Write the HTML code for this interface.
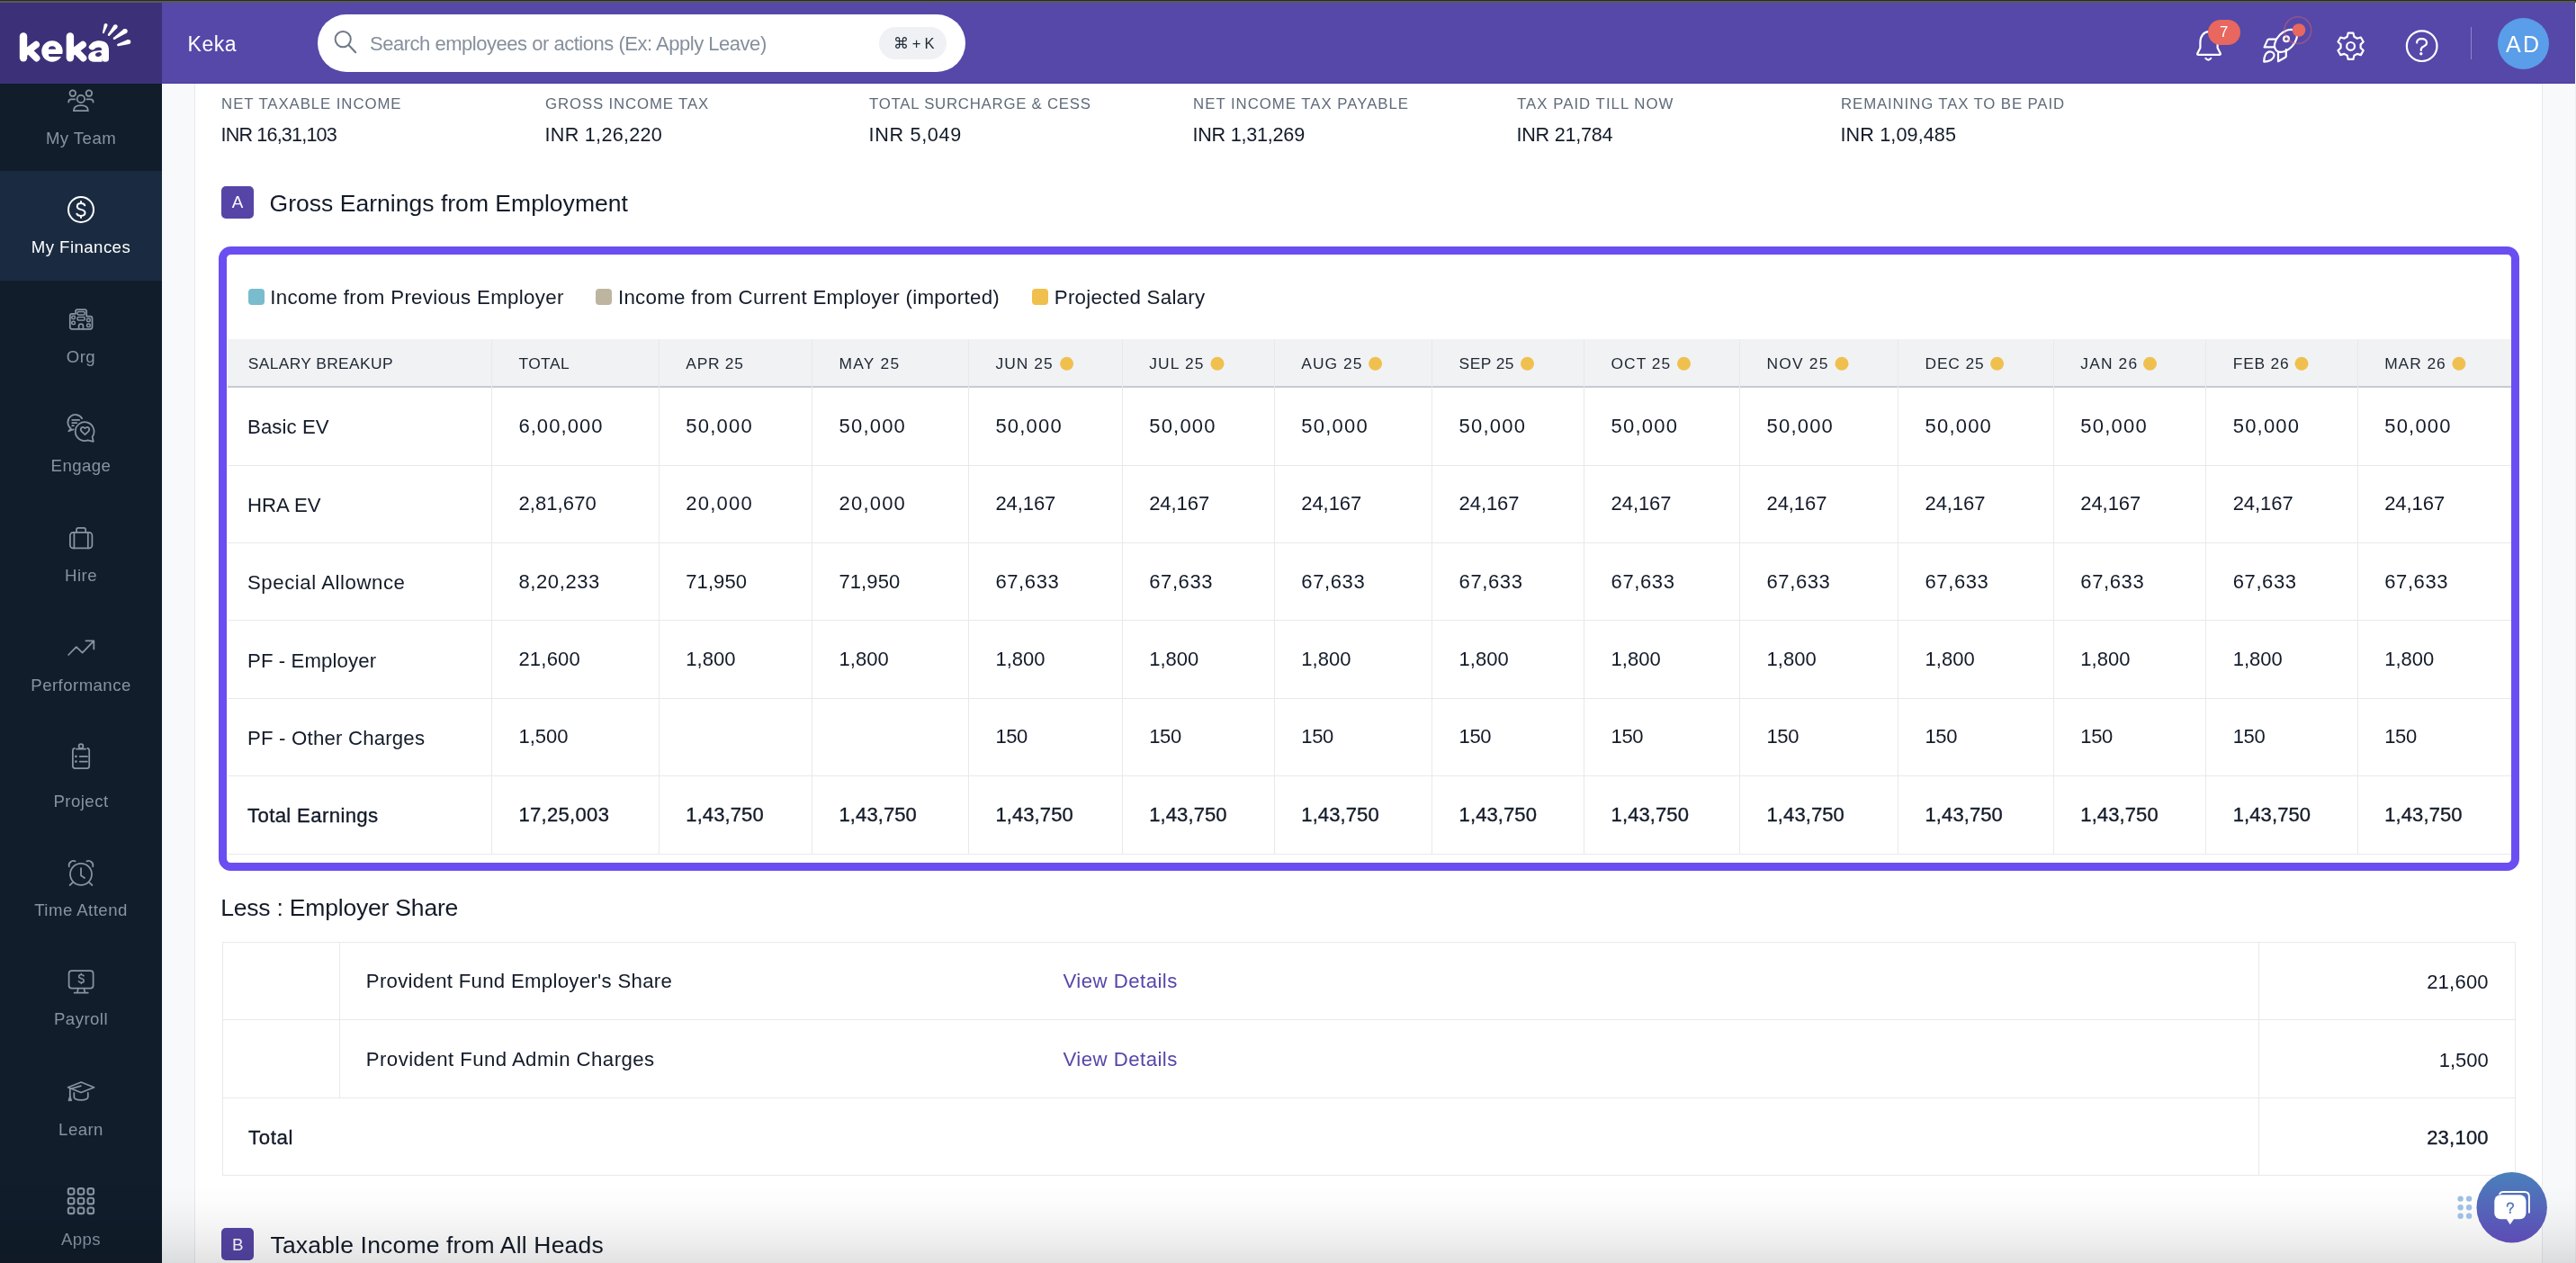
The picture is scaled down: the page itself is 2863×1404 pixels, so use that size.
<!DOCTYPE html><html><head><meta charset="utf-8"><style>html,body{margin:0;padding:0;width:2863px;height:1404px;overflow:hidden;background:#fff}body{position:relative;font-family:"Liberation Sans",sans-serif}.t{position:absolute;white-space:nowrap;line-height:1}</style></head><body>
<div style="position:absolute;left:0px;top:0px;width:2863px;height:1404px;background:#ffffff;"></div>
<div style="position:absolute;left:180px;top:93px;width:36px;height:1311px;background:#f8f9fb;"></div>
<div style="position:absolute;left:216px;top:93px;width:1px;height:1311px;background:#e6e8ec;"></div>
<div style="position:absolute;left:2825px;top:93px;width:1px;height:1311px;background:#e6e8ec;"></div>
<div style="position:absolute;left:2826px;top:93px;width:36px;height:1311px;background:#f8f9fb;"></div>
<div style="position:absolute;left:2862px;top:93px;width:1px;height:1311px;background:#eceef1;"></div>
<div style="position:absolute;left:0px;top:0px;width:2863px;height:1px;background:#2a2a2a;"></div>
<div style="position:absolute;left:0px;top:1px;width:2863px;height:2px;background:#5a5a56;"></div>
<div style="position:absolute;left:180px;top:3px;width:2682px;height:90px;background:#5548a9;"></div>
<div style="position:absolute;left:180px;top:92px;width:2682px;height:1px;background:#4a3c9f;"></div>
<div style="position:absolute;left:0px;top:3px;width:180px;height:90px;background:#3c3178;"></div>
<div style="position:absolute;left:0px;top:93px;width:180px;height:1311px;background:#111d2b;"></div>
<div style="position:absolute;left:0px;top:190px;width:180px;height:122px;background:#1a2b41;"></div>
<div style="position:absolute;left:353px;top:16px;width:720px;height:64px;background:#ffffff;border-radius:32px"></div>
<div style="position:absolute;left:977px;top:30px;width:75px;height:36px;background:#eff1f4;border-radius:18px"></div>
<svg style="position:absolute;left:368px;top:31px" width="32" height="32" viewBox="0 0 32 32"><circle cx="13.2" cy="12.6" r="8.6" fill="none" stroke="#6f7a88" stroke-width="2"/><line x1="19.5" y1="19" x2="27.2" y2="27.2" stroke="#6f7a88" stroke-width="2.1" stroke-linecap="round"/></svg>
<div style="position:absolute;left:2776px;top:19.5px;width:57px;height:57px;background:#5a9de8;border-radius:50%"></div>
<div style="position:absolute;left:2745.5px;top:30px;width:1.3px;height:36px;background:rgba(190,180,240,0.55);"></div>
<div style="position:absolute;left:246px;top:206.5px;width:36px;height:36px;background:#5645a6;border-radius:5px"></div>
<div style="position:absolute;left:243px;top:274px;width:2557px;height:693.6px;box-sizing:border-box;border:9.7px solid #6b4ef1;border-right-width:9.3px;border-radius:13.5px;background:#fff"></div>
<div style="position:absolute;left:275.8px;top:321px;width:17.8px;height:17.8px;background:#79bccd;border-radius:4px"></div>
<div style="position:absolute;left:662.4px;top:321px;width:17.8px;height:17.8px;background:#bdb59f;border-radius:4px"></div>
<div style="position:absolute;left:1147.3px;top:321px;width:17.8px;height:17.8px;background:#f0c04e;border-radius:4px"></div>
<div style="position:absolute;left:253px;top:377px;width:2538px;height:52.5px;background:#f1f2f4;"></div>
<div style="position:absolute;left:253px;top:429px;width:2538px;height:2.2px;background:#c5cbd3;"></div>
<div style="position:absolute;left:545.9px;top:377px;width:1.2px;height:572.5px;background:#e7e9ec;"></div>
<div style="position:absolute;left:731.8px;top:377px;width:1.2px;height:572.5px;background:#e7e9ec;"></div>
<div style="position:absolute;left:902.0px;top:377px;width:1.2px;height:572.5px;background:#e7e9ec;"></div>
<div style="position:absolute;left:1075.9px;top:377px;width:1.2px;height:572.5px;background:#e7e9ec;"></div>
<div style="position:absolute;left:1246.7px;top:377px;width:1.2px;height:572.5px;background:#e7e9ec;"></div>
<div style="position:absolute;left:1415.8px;top:377px;width:1.2px;height:572.5px;background:#e7e9ec;"></div>
<div style="position:absolute;left:1591.1px;top:377px;width:1.2px;height:572.5px;background:#e7e9ec;"></div>
<div style="position:absolute;left:1760.1px;top:377px;width:1.2px;height:572.5px;background:#e7e9ec;"></div>
<div style="position:absolute;left:1933.0px;top:377px;width:1.2px;height:572.5px;background:#e7e9ec;"></div>
<div style="position:absolute;left:2109.0px;top:377px;width:1.2px;height:572.5px;background:#e7e9ec;"></div>
<div style="position:absolute;left:2281.8px;top:377px;width:1.2px;height:572.5px;background:#e7e9ec;"></div>
<div style="position:absolute;left:2451.2px;top:377px;width:1.2px;height:572.5px;background:#e7e9ec;"></div>
<div style="position:absolute;left:2619.7px;top:377px;width:1.2px;height:572.5px;background:#e7e9ec;"></div>
<div style="position:absolute;left:253px;top:516.6px;width:2538px;height:1.2px;background:#e7e9ec;"></div>
<div style="position:absolute;left:253px;top:603.0px;width:2538px;height:1.2px;background:#e7e9ec;"></div>
<div style="position:absolute;left:253px;top:689.1px;width:2538px;height:1.2px;background:#e7e9ec;"></div>
<div style="position:absolute;left:253px;top:775.9px;width:2538px;height:1.2px;background:#e7e9ec;"></div>
<div style="position:absolute;left:253px;top:862.0px;width:2538px;height:1.2px;background:#e7e9ec;"></div>
<div style="position:absolute;left:253px;top:948.9px;width:2538px;height:1.2px;background:#e7e9ec;"></div>
<div style="position:absolute;left:246.5px;top:1046.8px;width:2549px;height:260px;box-sizing:border-box;border:1.2px solid #e7e9ec"></div>
<div style="position:absolute;left:246.5px;top:1132.8px;width:2549px;height:1.2px;background:#e7e9ec;"></div>
<div style="position:absolute;left:246.5px;top:1219.9px;width:2549px;height:1.2px;background:#e7e9ec;"></div>
<div style="position:absolute;left:377px;top:1046.8px;width:1.2px;height:173.6px;background:#e7e9ec;"></div>
<div style="position:absolute;left:2510px;top:1046.8px;width:1.2px;height:260px;background:#e7e9ec;"></div>
<div style="position:absolute;left:246px;top:1365.2px;width:36px;height:36px;background:#5645a6;border-radius:5px"></div>
<svg style="position:absolute;left:0;top:0" width="180" height="93" viewBox="0 0 180 93"><line x1="26" y1="40.5" x2="26" y2="64.2" stroke="#ffffff" stroke-width="8.4" stroke-linecap="round"/><line x1="29" y1="58" x2="40.2" y2="49.6" stroke="#ffffff" stroke-width="7.6" stroke-linecap="round"/><line x1="32.5" y1="56.5" x2="40.6" y2="64.6" stroke="#ffffff" stroke-width="7.6" stroke-linecap="round"/><line x1="77.9" y1="40.5" x2="77.9" y2="64.2" stroke="#ffffff" stroke-width="8.4" stroke-linecap="round"/><line x1="80.9" y1="58" x2="92.1" y2="49.6" stroke="#ffffff" stroke-width="7.6" stroke-linecap="round"/><line x1="84.4" y1="56.5" x2="92.5" y2="64.6" stroke="#ffffff" stroke-width="7.6" stroke-linecap="round"/><circle cx="57.95" cy="57.05" r="11.7" fill="#ffffff"/><path d="M53.9 54.8 Q53.9 51.25 57.95 51.25 Q62 51.25 62 54.8 Z" fill="#3c3178"/><path d="M54.1 60 H70.5 V62.9 H55.5 Q54.1 62.9 54.1 61.45 Z" fill="#3c3178"/><path d="M98.4 52.6 C100.6 47.8 104.7 45.3 110.2 45.3 C117.3 45.3 121 49.2 121 55.5 V60 H113.2 V55.8 C113.2 53.6 112 52.6 109.8 52.6 C107.6 52.6 106 53.3 104.9 54.6 C103.5 56.2 99.5 55.5 98.4 52.6 Z" fill="#ffffff"/><path d="M98.2 63.4 C98.2 59.2 102.3 57.2 107.2 56.6 L113.6 55.8 V68.4 C111.5 68.7 108.5 68.8 105.5 68.8 C101 68.8 98.2 66.8 98.2 63.4 Z" fill="#ffffff"/><path d="M113.2 55 H121 V65.2 C121 67.6 119.6 68.8 117.1 68.8 C114.6 68.8 113.2 67.6 113.2 65.2 Z" fill="#ffffff"/><ellipse cx="109.4" cy="60.6" rx="3.5" ry="2.4" transform="rotate(-12 109.4 60.6)" fill="#3c3178"/><polygon points="115.85,36.60 119.41,28.38 115.79,27.22 113.95,36.00" fill="#ffffff"/><circle cx="117.60" cy="27.80" r="1.90" fill="#ffffff"/><circle cx="114.90" cy="36.30" r="1.00" fill="#ffffff"/><polygon points="121.94,39.45 130.17,31.10 126.43,28.10 120.06,37.95" fill="#ffffff"/><circle cx="128.30" cy="29.60" r="2.40" fill="#ffffff"/><circle cx="121.00" cy="38.70" r="1.20" fill="#ffffff"/><polygon points="127.73,43.87 140.52,36.83 137.48,32.37 126.27,41.73" fill="#ffffff"/><circle cx="139.00" cy="34.60" r="2.70" fill="#ffffff"/><circle cx="127.00" cy="42.80" r="1.30" fill="#ffffff"/><polygon points="131.65,51.15 143.53,48.89 142.07,44.11 130.95,48.85" fill="#ffffff"/><circle cx="142.80" cy="46.50" r="2.50" fill="#ffffff"/><circle cx="131.30" cy="50.00" r="1.20" fill="#ffffff"/></svg>
<svg style="position:absolute;left:0;top:0" width="2863" height="93" viewBox="0 0 2863 93"><path d="M2442.3 59.2 L2445.4 53.2 V47 C2445.4 40 2449.5 35.2 2455 35.2 C2460.5 35.2 2464.6 40 2464.6 47 V53.2 L2467.7 59.2 C2468.3 60.4 2467.6 60.8 2466.5 60.8 H2443.5 C2442.4 60.8 2441.7 60.4 2442.3 59.2 Z" fill="none" stroke="#fff" stroke-width="2.2" stroke-linecap="round" stroke-linejoin="round"/><path d="M2451.4 64.9 Q2454.3 68.3 2457.2 64.9" fill="none" stroke="#fff" stroke-width="2.2" stroke-linecap="round" stroke-linejoin="round"/><rect x="2454" y="22" width="36" height="28" rx="14" fill="#e8675e"/><ellipse cx="2540.4" cy="45.4" rx="15.0" ry="9.3" transform="rotate(-45 2540.4 45.4)" fill="none" stroke="#fff" stroke-width="2.2" stroke-linecap="round" stroke-linejoin="round"/><circle cx="2541.0" cy="43.3" r="2.9" fill="none" stroke="#fff" stroke-width="2.2" stroke-linecap="round" stroke-linejoin="round"/><path d="M2529.6 43.6 H2521.8 Q2520.6 43.6 2520.1 44.6 L2516.6 52.4 H2527.6" fill="none" stroke="#fff" stroke-width="2.2" stroke-linecap="round" stroke-linejoin="round"/><path d="M2540.8 55.2 V62.2 Q2540.8 63.2 2539.9 63.7 L2532 68.2 V57.8" fill="none" stroke="#fff" stroke-width="2.2" stroke-linecap="round" stroke-linejoin="round"/><path d="M2516.2 68.6 C2516.2 62.2 2518.7 57.3 2522.8 57.3 C2525.8 57.3 2527.9 59.6 2527.5 61.9 C2526.9 65.8 2522.2 68.6 2516.2 68.6 Z" fill="none" stroke="#fff" stroke-width="2.2" stroke-linecap="round" stroke-linejoin="round"/><circle cx="2553.8" cy="33.6" r="14.9" fill="none" stroke="rgba(232,103,95,0.42)" stroke-width="1.6"/><circle cx="2555" cy="33.5" r="7.3" fill="#e8675e"/><path d="M2608.77 40.78 L2609.76 36.67 L2615.44 36.67 L2616.43 40.78 L2619.80 42.72 L2623.85 41.52 L2626.69 46.45 L2623.63 49.36 L2623.63 53.24 L2626.69 56.15 L2623.85 61.08 L2619.80 59.88 L2616.43 61.82 L2615.44 65.93 L2609.76 65.93 L2608.77 61.82 L2605.40 59.88 L2601.35 61.08 L2598.51 56.15 L2601.57 53.24 L2601.57 49.36 L2598.51 46.45 L2601.35 41.52 L2605.40 42.72 Z" fill="none" stroke="#fff" stroke-width="2.2" stroke-linecap="round" stroke-linejoin="round"/><circle cx="2612.6" cy="51.4" r="4.4" fill="none" stroke="#fff" stroke-width="2.2" stroke-linecap="round" stroke-linejoin="round"/><circle cx="2691.7" cy="51.2" r="16.8" fill="none" stroke="#fff" stroke-width="2.2" stroke-linecap="round" stroke-linejoin="round"/><path d="M2686.1 47.6 C2686.1 44.6 2688.5 43.1 2691.6 43.1 C2694.7 43.1 2697.1 44.9 2697.1 47.6 C2697.1 49.9 2695.4 50.9 2693.5 51.8 C2691.8 52.6 2690.8 53.5 2690.8 55.3 V56" fill="none" stroke="#fff" stroke-width="2.2" stroke-linecap="round" stroke-linejoin="round"/><circle cx="2690.8" cy="59.7" r="1.7" fill="#fff"/></svg>
<svg style="position:absolute;left:0;top:0" width="180" height="1404" viewBox="0 0 180 1404"><circle cx="89.9" cy="110" r="4.2" fill="none" stroke="#8794a2" stroke-width="1.75" stroke-linecap="round" stroke-linejoin="round"/><circle cx="80.8" cy="103.7" r="3.3" fill="none" stroke="#8794a2" stroke-width="1.75" stroke-linecap="round" stroke-linejoin="round"/><circle cx="98.9" cy="103.7" r="3.3" fill="none" stroke="#8794a2" stroke-width="1.75" stroke-linecap="round" stroke-linejoin="round"/><path d="M81.9 123.2 Q81.9 117.2 89.9 117.2 Q97.9 117.2 97.9 123.2 Z" fill="none" stroke="#8794a2" stroke-width="1.75" stroke-linecap="round" stroke-linejoin="round"/><path d="M83.4 110.4 H79.2 Q76.2 110.4 76.2 113.6" fill="none" stroke="#8794a2" stroke-width="1.75" stroke-linecap="round" stroke-linejoin="round"/><path d="M96.4 110.4 H100.6 Q103.6 110.4 103.6 113.6" fill="none" stroke="#8794a2" stroke-width="1.75" stroke-linecap="round" stroke-linejoin="round"/><circle cx="90" cy="233" r="14" fill="none" stroke="#fff" stroke-width="2" stroke-linecap="round" stroke-linejoin="round"/><path d="M94.3 228.3 C93.7 226.9 92.2 226.1 90 226.1 C87.4 226.1 85.8 227.5 85.8 229.4 C85.8 231.6 87.8 232.3 90 232.9 C92.5 233.5 94.5 234.3 94.5 236.6 C94.5 238.6 92.7 239.9 90 239.9 C87.7 239.9 86.1 239.1 85.4 237.7 M90 223.9 V226.1 M90 239.9 V242.1" fill="none" stroke="#fff" stroke-width="2" stroke-linecap="round" stroke-linejoin="round"/><path d="M77.8 363.6 V351 Q77.8 348.8 80 348.8 H84 V346.3 Q84 344.2 86.1 344.2 H94.1 Q96.2 344.2 96.2 346.3 V351.6 H100.3 Q102.5 351.6 102.5 353.8 V363.6 Q102.5 365.8 100.3 365.8 H80 Q77.8 365.8 77.8 363.6 Z" fill="none" stroke="#8794a2" stroke-width="1.75" stroke-linecap="round" stroke-linejoin="round"/><rect x="79.8" y="351.3" width="3.6" height="3.1" rx="1.2" fill="none" stroke="#8794a2" stroke-width="1.5"/><rect x="79.8" y="357.3" width="3.6" height="3.1" rx="1.2" fill="none" stroke="#8794a2" stroke-width="1.5"/><rect x="86.0" y="346.6" width="8.2" height="3.3" rx="1.2" fill="none" stroke="#8794a2" stroke-width="1.5"/><rect x="86.0" y="352.5" width="8.2" height="3.4" rx="1.2" fill="none" stroke="#8794a2" stroke-width="1.5"/><rect x="96.6" y="354.1" width="3.6" height="3.3" rx="1.2" fill="none" stroke="#8794a2" stroke-width="1.5"/><rect x="96.6" y="360.0" width="3.6" height="3.4" rx="1.2" fill="none" stroke="#8794a2" stroke-width="1.5"/><path d="M87.6 365.6 V362.2 Q87.6 360 90 360 Q92.4 360 92.4 362.2 V365.6" fill="none" stroke="#8794a2" stroke-width="1.75" stroke-linecap="round" stroke-linejoin="round"/><path d="M91.2 465.2 A8.5 8.5 0 1 0 78.9 476.4 L76.3 479.3 L81.6 477.4" fill="none" stroke="#8794a2" stroke-width="1.75" stroke-linecap="round" stroke-linejoin="round"/><path d="M80.2 466.9 H88.1 M80.2 470 H85.3 M80.2 473 H81.9" fill="none" stroke="#8794a2" stroke-width="1.75" stroke-linecap="round" stroke-linejoin="round"/><path d="M97.6 489.4 A10.4 10.4 0 1 1 102.6 485.6 L103.8 490.8 Z" fill="none" stroke="#8794a2" stroke-width="1.75" stroke-linecap="round" stroke-linejoin="round"/><path d="M94.5 483.2 L90.8 479.6 Q88.9 477.6 90.3 475.7 Q92.1 473.8 94.5 476.1 Q96.9 473.8 98.7 475.7 Q100.1 477.6 98.2 479.6 Z" fill="none" stroke="#8794a2" stroke-width="1.75" stroke-linecap="round" stroke-linejoin="round"/><rect x="77.9" y="591.8" width="24.5" height="17.6" rx="3.4" fill="none" stroke="#8794a2" stroke-width="1.75" stroke-linecap="round" stroke-linejoin="round"/><path d="M85 591.8 V588.9 Q85 586.8 87.1 586.8 H93.1 Q95.2 586.8 95.2 588.9 V591.8 M82.4 591.8 V609.4 M97.8 591.8 V609.4" fill="none" stroke="#8794a2" stroke-width="1.75" stroke-linecap="round" stroke-linejoin="round"/><path d="M76.1 728 L84.8 719.2 L91.6 725.6 L104 712.7 M95.4 712.3 H104.3 V721.4" fill="none" stroke="#8794a2" stroke-width="1.75" stroke-linecap="round" stroke-linejoin="round"/><path d="M82.9 831.8 Q80.9 832 80.9 834.6 V851.6 Q80.9 854.1 83.4 854.1 H96.7 Q99.2 854.1 99.2 851.6 V834.6 Q99.2 832 97.2 831.8" fill="none" stroke="#8794a2" stroke-width="1.75" stroke-linecap="round" stroke-linejoin="round"/><circle cx="90" cy="829.5" r="2.4" fill="none" stroke="#8794a2" stroke-width="1.75" stroke-linecap="round" stroke-linejoin="round"/><path d="M84.9 832.6 H95.1" fill="none" stroke="#8794a2" stroke-width="1.75" stroke-linecap="round" stroke-linejoin="round"/><circle cx="84.4" cy="840.9" r="1.3" fill="#8794a2"/><circle cx="84.4" cy="846.6" r="1.3" fill="#8794a2"/><path d="M88.7 840.9 H97 M88.7 846.6 H97" fill="none" stroke="#8794a2" stroke-width="1.75" stroke-linecap="round" stroke-linejoin="round"/><circle cx="90" cy="971.8" r="12" fill="none" stroke="#8794a2" stroke-width="1.75" stroke-linecap="round" stroke-linejoin="round"/><path d="M90 965 V973.2 L94 976" fill="none" stroke="#8794a2" stroke-width="1.75" stroke-linecap="round" stroke-linejoin="round"/><path d="M76.8 963.3 A5 5 0 0 1 83.6 957.4 M103.2 963.3 A5 5 0 0 0 96.4 957.4" fill="none" stroke="#8794a2" stroke-width="1.75" stroke-linecap="round" stroke-linejoin="round"/><path d="M81.2 980.6 L77.6 984 M98.8 980.6 L102.4 984" fill="none" stroke="#8794a2" stroke-width="1.75" stroke-linecap="round" stroke-linejoin="round"/><rect x="76.6" y="1079" width="27" height="19.6" rx="3.2" fill="none" stroke="#8794a2" stroke-width="1.75" stroke-linecap="round" stroke-linejoin="round"/><path d="M86.8 1098.8 L86 1103.3 M93.5 1098.8 L94.3 1103.3 M82.6 1103.5 H97.8" fill="none" stroke="#8794a2" stroke-width="1.75" stroke-linecap="round" stroke-linejoin="round"/><path d="M93.1 1084.9 C92.7 1084 91.7 1083.6 90.3 1083.6 C88.6 1083.6 87.6 1084.4 87.6 1085.6 C87.6 1087 88.9 1087.4 90.3 1087.8 C91.9 1088.2 93.2 1088.7 93.2 1090.2 C93.2 1091.5 92 1092.3 90.3 1092.3 C88.8 1092.3 87.8 1091.7 87.4 1090.8 M90.3 1082.3 V1083.6 M90.3 1092.3 V1093.6" fill="none" stroke="#8794a2" stroke-width="1.5" stroke-linecap="round"/><path d="M75.6 1208.8 L90.1 1203 L104.6 1208.8 L90.1 1214.5 Z" fill="none" stroke="#8794a2" stroke-width="1.75" stroke-linecap="round" stroke-linejoin="round"/><path d="M82.3 1214.9 V1219.3 Q82.3 1222.9 90.1 1222.9 Q97.8 1222.9 97.8 1219.3 V1214.9" fill="none" stroke="#8794a2" stroke-width="1.75" stroke-linecap="round" stroke-linejoin="round"/><path d="M89.9 1207.2 L77.8 1210.6 V1219" fill="none" stroke="#8794a2" stroke-width="1.75" stroke-linecap="round" stroke-linejoin="round"/><path d="M76 1223.6 L77.8 1217.8 L79.6 1223.6 Z" fill="#8794a2" stroke="#8794a2" stroke-width="1" stroke-linejoin="round"/><rect x="75.80" y="1321.10" width="6.6" height="6.6" rx="2.2" fill="none" stroke="#8794a2" stroke-width="2.1"/><rect x="75.80" y="1331.80" width="6.6" height="6.6" rx="2.2" fill="none" stroke="#8794a2" stroke-width="2.1"/><rect x="75.80" y="1342.50" width="6.6" height="6.6" rx="2.2" fill="none" stroke="#8794a2" stroke-width="2.1"/><rect x="86.70" y="1321.10" width="6.6" height="6.6" rx="2.2" fill="none" stroke="#8794a2" stroke-width="2.1"/><rect x="86.70" y="1331.80" width="6.6" height="6.6" rx="2.2" fill="none" stroke="#8794a2" stroke-width="2.1"/><rect x="86.70" y="1342.50" width="6.6" height="6.6" rx="2.2" fill="none" stroke="#8794a2" stroke-width="2.1"/><rect x="97.50" y="1321.10" width="6.6" height="6.6" rx="2.2" fill="none" stroke="#8794a2" stroke-width="2.1"/><rect x="97.50" y="1331.80" width="6.6" height="6.6" rx="2.2" fill="none" stroke="#8794a2" stroke-width="2.1"/><rect x="97.50" y="1342.50" width="6.6" height="6.6" rx="2.2" fill="none" stroke="#8794a2" stroke-width="2.1"/></svg>
<svg style="position:absolute;left:0;top:380px" width="2863" height="50" viewBox="0 380 2863 50"><circle cx="1185.6" cy="404.2" r="7.5" fill="#f0c04e"/><circle cx="1353.0" cy="404.2" r="7.5" fill="#f0c04e"/><circle cx="1528.6" cy="404.2" r="7.5" fill="#f0c04e"/><circle cx="1697.5" cy="404.2" r="7.5" fill="#f0c04e"/><circle cx="1871.5" cy="404.2" r="7.5" fill="#f0c04e"/><circle cx="2047.0" cy="404.2" r="7.5" fill="#f0c04e"/><circle cx="2219.6" cy="404.2" r="7.5" fill="#f0c04e"/><circle cx="2389.5" cy="404.2" r="7.5" fill="#f0c04e"/><circle cx="2558.0" cy="404.2" r="7.5" fill="#f0c04e"/><circle cx="2732.9" cy="404.2" r="7.5" fill="#f0c04e"/></svg>
<div style="position:absolute;left:0;top:0;width:2863px;height:1404px;will-change:transform">
<div class="t" style="top:37.83px;font-size:23px;color:#ffffff;letter-spacing:0.501px;left:208.60px;">Keka</div>
<div class="t" style="top:38.08px;font-size:22px;color:#858f9c;letter-spacing:-0.478px;left:411.00px;">Search employees or actions (Ex: Apply Leave)</div>
<div class="t" style="top:40.03px;font-size:16.5px;color:#1f2937;letter-spacing:-0.198px;left:992.50px;">⌘ + K</div>
<div class="t" style="top:27.76px;font-size:16.7px;color:#ffffff;left:2467.00px;">7</div>
<div class="t" style="top:36.64px;font-size:25px;color:#ffffff;letter-spacing:2.383px;left:2785.00px;">AD</div>
<div class="t" style="top:145.26px;font-size:18.6px;color:#8794a2;letter-spacing:0.450px;left:-310.00px;width:800px;text-align:center;">My Team</div>
<div class="t" style="top:266.26px;font-size:18.6px;color:#ffffff;letter-spacing:0.450px;left:-310.00px;width:800px;text-align:center;">My Finances</div>
<div class="t" style="top:387.96px;font-size:18.6px;color:#8794a2;letter-spacing:0.450px;left:-310.00px;width:800px;text-align:center;">Org</div>
<div class="t" style="top:508.86px;font-size:18.6px;color:#8794a2;letter-spacing:0.450px;left:-310.00px;width:800px;text-align:center;">Engage</div>
<div class="t" style="top:631.36px;font-size:18.6px;color:#8794a2;letter-spacing:0.450px;left:-310.00px;width:800px;text-align:center;">Hire</div>
<div class="t" style="top:753.26px;font-size:18.6px;color:#8794a2;letter-spacing:0.450px;left:-310.00px;width:800px;text-align:center;">Performance</div>
<div class="t" style="top:881.66px;font-size:18.6px;color:#8794a2;letter-spacing:0.450px;left:-310.00px;width:800px;text-align:center;">Project</div>
<div class="t" style="top:1003.26px;font-size:18.6px;color:#8794a2;letter-spacing:0.450px;left:-310.00px;width:800px;text-align:center;">Time Attend</div>
<div class="t" style="top:1124.46px;font-size:18.6px;color:#8794a2;letter-spacing:0.450px;left:-310.00px;width:800px;text-align:center;">Payroll</div>
<div class="t" style="top:1246.56px;font-size:18.6px;color:#8794a2;letter-spacing:0.450px;left:-310.00px;width:800px;text-align:center;">Learn</div>
<div class="t" style="top:1368.56px;font-size:18.6px;color:#8794a2;letter-spacing:0.450px;left:-310.00px;width:800px;text-align:center;">Apps</div>
<div class="t" style="top:108.38px;font-size:16.8px;color:#5e6a79;letter-spacing:0.924px;left:246.10px;">NET TAXABLE INCOME</div>
<div class="t" style="top:138.92px;font-size:21.6px;color:#131b29;letter-spacing:-0.834px;left:245.50px;">INR 16,31,103</div>
<div class="t" style="top:108.38px;font-size:16.8px;color:#5e6a79;letter-spacing:0.862px;left:606.10px;">GROSS INCOME TAX</div>
<div class="t" style="top:138.92px;font-size:21.6px;color:#131b29;letter-spacing:0.282px;left:605.50px;">INR 1,26,220</div>
<div class="t" style="top:108.38px;font-size:16.8px;color:#5e6a79;letter-spacing:0.751px;left:966.10px;">TOTAL SURCHARGE &amp; CESS</div>
<div class="t" style="top:138.92px;font-size:21.6px;color:#131b29;letter-spacing:0.688px;left:965.50px;">INR 5,049</div>
<div class="t" style="top:108.38px;font-size:16.8px;color:#5e6a79;letter-spacing:0.988px;left:1326.10px;">NET INCOME TAX PAYABLE</div>
<div class="t" style="top:138.92px;font-size:21.6px;color:#131b29;letter-spacing:-0.235px;left:1325.50px;">INR 1,31,269</div>
<div class="t" style="top:108.38px;font-size:16.8px;color:#5e6a79;letter-spacing:1.022px;left:1686.10px;">TAX PAID TILL NOW</div>
<div class="t" style="top:138.92px;font-size:21.6px;color:#131b29;letter-spacing:-0.261px;left:1685.50px;">INR 21,784</div>
<div class="t" style="top:108.38px;font-size:16.8px;color:#5e6a79;letter-spacing:0.875px;left:2046.10px;">REMAINING TAX TO BE PAID</div>
<div class="t" style="top:138.92px;font-size:21.6px;color:#131b29;letter-spacing:0.115px;left:2045.50px;">INR 1,09,485</div>
<div class="t" style="top:216.29px;font-size:18.8px;color:#ffffff;left:-136.00px;width:800px;text-align:center;">A</div>
<div class="t" style="top:212.57px;font-size:26.5px;color:#131b29;letter-spacing:0.026px;left:299.50px;">Gross Earnings from Employment</div>
<div class="t" style="top:320.22px;font-size:22.3px;color:#131b29;letter-spacing:0.316px;left:300.30px;">Income from Previous Employer</div>
<div class="t" style="top:320.22px;font-size:22.3px;color:#131b29;letter-spacing:0.296px;left:686.90px;">Income from Current Employer (imported)</div>
<div class="t" style="top:320.22px;font-size:22.3px;color:#131b29;letter-spacing:0.243px;left:1171.80px;">Projected Salary</div>
<div class="t" style="top:395.67px;font-size:17.4px;color:#1e2633;letter-spacing:0.367px;left:275.80px;">SALARY BREAKUP</div>
<div class="t" style="top:395.67px;font-size:17.4px;color:#1e2633;letter-spacing:0.448px;left:576.40px;">TOTAL</div>
<div class="t" style="top:395.67px;font-size:17.4px;color:#1e2633;letter-spacing:0.742px;left:762.30px;">APR 25</div>
<div class="t" style="top:395.67px;font-size:17.4px;color:#1e2633;letter-spacing:1.271px;left:932.50px;">MAY 25</div>
<div class="t" style="top:395.67px;font-size:17.4px;color:#1e2633;letter-spacing:1.082px;left:1106.40px;">JUN 25</div>
<div class="t" style="top:395.67px;font-size:17.4px;color:#1e2633;letter-spacing:1.154px;left:1277.20px;">JUL 25</div>
<div class="t" style="top:395.67px;font-size:17.4px;color:#1e2633;letter-spacing:1.053px;left:1446.30px;">AUG 25</div>
<div class="t" style="top:395.67px;font-size:17.4px;color:#1e2633;letter-spacing:0.437px;left:1621.60px;">SEP 25</div>
<div class="t" style="top:395.67px;font-size:17.4px;color:#1e2633;letter-spacing:1.002px;left:1790.60px;">OCT 25</div>
<div class="t" style="top:395.67px;font-size:17.4px;color:#1e2633;letter-spacing:1.203px;left:1963.50px;">NOV 25</div>
<div class="t" style="top:395.67px;font-size:17.4px;color:#1e2633;letter-spacing:0.848px;left:2139.50px;">DEC 25</div>
<div class="t" style="top:395.67px;font-size:17.4px;color:#1e2633;letter-spacing:1.160px;left:2312.30px;">JAN 26</div>
<div class="t" style="top:395.67px;font-size:17.4px;color:#1e2633;letter-spacing:0.815px;left:2481.70px;">FEB 26</div>
<div class="t" style="top:395.67px;font-size:17.4px;color:#1e2633;letter-spacing:0.944px;left:2650.20px;">MAR 26</div>
<div class="t" style="top:464.31px;font-size:22.2px;color:#131b29;letter-spacing:0.081px;left:275.00px;">Basic EV</div>
<div class="t" style="top:462.98px;font-size:22.0px;color:#131b29;letter-spacing:1.065px;left:576.40px;">6,00,000</div>
<div class="t" style="top:462.98px;font-size:22.0px;color:#131b29;letter-spacing:1.211px;left:762.30px;">50,000</div>
<div class="t" style="top:462.98px;font-size:22.0px;color:#131b29;letter-spacing:1.211px;left:932.50px;">50,000</div>
<div class="t" style="top:462.98px;font-size:22.0px;color:#131b29;letter-spacing:1.211px;left:1106.40px;">50,000</div>
<div class="t" style="top:462.98px;font-size:22.0px;color:#131b29;letter-spacing:1.211px;left:1277.20px;">50,000</div>
<div class="t" style="top:462.98px;font-size:22.0px;color:#131b29;letter-spacing:1.211px;left:1446.30px;">50,000</div>
<div class="t" style="top:462.98px;font-size:22.0px;color:#131b29;letter-spacing:1.211px;left:1621.60px;">50,000</div>
<div class="t" style="top:462.98px;font-size:22.0px;color:#131b29;letter-spacing:1.211px;left:1790.60px;">50,000</div>
<div class="t" style="top:462.98px;font-size:22.0px;color:#131b29;letter-spacing:1.211px;left:1963.50px;">50,000</div>
<div class="t" style="top:462.98px;font-size:22.0px;color:#131b29;letter-spacing:1.211px;left:2139.50px;">50,000</div>
<div class="t" style="top:462.98px;font-size:22.0px;color:#131b29;letter-spacing:1.211px;left:2312.30px;">50,000</div>
<div class="t" style="top:462.98px;font-size:22.0px;color:#131b29;letter-spacing:1.211px;left:2481.70px;">50,000</div>
<div class="t" style="top:462.98px;font-size:22.0px;color:#131b29;letter-spacing:1.211px;left:2650.20px;">50,000</div>
<div class="t" style="top:550.71px;font-size:22.2px;color:#131b29;letter-spacing:0.031px;left:275.00px;">HRA EV</div>
<div class="t" style="top:549.38px;font-size:22.0px;color:#131b29;letter-spacing:0.102px;left:576.40px;">2,81,670</div>
<div class="t" style="top:549.38px;font-size:22.0px;color:#131b29;letter-spacing:1.211px;left:762.30px;">20,000</div>
<div class="t" style="top:549.38px;font-size:22.0px;color:#131b29;letter-spacing:1.211px;left:932.50px;">20,000</div>
<div class="t" style="top:549.38px;font-size:22.0px;color:#131b29;letter-spacing:-0.073px;left:1106.40px;">24,167</div>
<div class="t" style="top:549.38px;font-size:22.0px;color:#131b29;letter-spacing:-0.073px;left:1277.20px;">24,167</div>
<div class="t" style="top:549.38px;font-size:22.0px;color:#131b29;letter-spacing:-0.073px;left:1446.30px;">24,167</div>
<div class="t" style="top:549.38px;font-size:22.0px;color:#131b29;letter-spacing:-0.073px;left:1621.60px;">24,167</div>
<div class="t" style="top:549.38px;font-size:22.0px;color:#131b29;letter-spacing:-0.073px;left:1790.60px;">24,167</div>
<div class="t" style="top:549.38px;font-size:22.0px;color:#131b29;letter-spacing:-0.073px;left:1963.50px;">24,167</div>
<div class="t" style="top:549.38px;font-size:22.0px;color:#131b29;letter-spacing:-0.073px;left:2139.50px;">24,167</div>
<div class="t" style="top:549.38px;font-size:22.0px;color:#131b29;letter-spacing:-0.073px;left:2312.30px;">24,167</div>
<div class="t" style="top:549.38px;font-size:22.0px;color:#131b29;letter-spacing:-0.073px;left:2481.70px;">24,167</div>
<div class="t" style="top:549.38px;font-size:22.0px;color:#131b29;letter-spacing:-0.073px;left:2650.20px;">24,167</div>
<div class="t" style="top:637.11px;font-size:22.2px;color:#131b29;letter-spacing:0.560px;left:275.00px;">Special Allownce</div>
<div class="t" style="top:635.78px;font-size:22.0px;color:#131b29;letter-spacing:0.615px;left:576.40px;">8,20,233</div>
<div class="t" style="top:635.78px;font-size:22.0px;color:#131b29;letter-spacing:0.077px;left:762.30px;">71,950</div>
<div class="t" style="top:635.78px;font-size:22.0px;color:#131b29;letter-spacing:0.077px;left:932.50px;">71,950</div>
<div class="t" style="top:635.78px;font-size:22.0px;color:#131b29;letter-spacing:0.611px;left:1106.40px;">67,633</div>
<div class="t" style="top:635.78px;font-size:22.0px;color:#131b29;letter-spacing:0.611px;left:1277.20px;">67,633</div>
<div class="t" style="top:635.78px;font-size:22.0px;color:#131b29;letter-spacing:0.611px;left:1446.30px;">67,633</div>
<div class="t" style="top:635.78px;font-size:22.0px;color:#131b29;letter-spacing:0.611px;left:1621.60px;">67,633</div>
<div class="t" style="top:635.78px;font-size:22.0px;color:#131b29;letter-spacing:0.611px;left:1790.60px;">67,633</div>
<div class="t" style="top:635.78px;font-size:22.0px;color:#131b29;letter-spacing:0.611px;left:1963.50px;">67,633</div>
<div class="t" style="top:635.78px;font-size:22.0px;color:#131b29;letter-spacing:0.611px;left:2139.50px;">67,633</div>
<div class="t" style="top:635.78px;font-size:22.0px;color:#131b29;letter-spacing:0.611px;left:2312.30px;">67,633</div>
<div class="t" style="top:635.78px;font-size:22.0px;color:#131b29;letter-spacing:0.611px;left:2481.70px;">67,633</div>
<div class="t" style="top:635.78px;font-size:22.0px;color:#131b29;letter-spacing:0.611px;left:2650.20px;">67,633</div>
<div class="t" style="top:723.51px;font-size:22.2px;color:#131b29;letter-spacing:0.107px;left:275.00px;">PF - Employer</div>
<div class="t" style="top:722.18px;font-size:22.0px;color:#131b29;letter-spacing:0.227px;left:576.40px;">21,600</div>
<div class="t" style="top:722.18px;font-size:22.0px;color:#131b29;letter-spacing:0.019px;left:762.30px;">1,800</div>
<div class="t" style="top:722.18px;font-size:22.0px;color:#131b29;letter-spacing:0.019px;left:932.50px;">1,800</div>
<div class="t" style="top:722.18px;font-size:22.0px;color:#131b29;letter-spacing:0.019px;left:1106.40px;">1,800</div>
<div class="t" style="top:722.18px;font-size:22.0px;color:#131b29;letter-spacing:0.019px;left:1277.20px;">1,800</div>
<div class="t" style="top:722.18px;font-size:22.0px;color:#131b29;letter-spacing:0.019px;left:1446.30px;">1,800</div>
<div class="t" style="top:722.18px;font-size:22.0px;color:#131b29;letter-spacing:0.019px;left:1621.60px;">1,800</div>
<div class="t" style="top:722.18px;font-size:22.0px;color:#131b29;letter-spacing:0.019px;left:1790.60px;">1,800</div>
<div class="t" style="top:722.18px;font-size:22.0px;color:#131b29;letter-spacing:0.019px;left:1963.50px;">1,800</div>
<div class="t" style="top:722.18px;font-size:22.0px;color:#131b29;letter-spacing:0.019px;left:2139.50px;">1,800</div>
<div class="t" style="top:722.18px;font-size:22.0px;color:#131b29;letter-spacing:0.019px;left:2312.30px;">1,800</div>
<div class="t" style="top:722.18px;font-size:22.0px;color:#131b29;letter-spacing:0.019px;left:2481.70px;">1,800</div>
<div class="t" style="top:722.18px;font-size:22.0px;color:#131b29;letter-spacing:0.019px;left:2650.20px;">1,800</div>
<div class="t" style="top:809.51px;font-size:22.2px;color:#131b29;letter-spacing:0.199px;left:275.00px;">PF - Other Charges</div>
<div class="t" style="top:808.18px;font-size:22.0px;color:#131b29;letter-spacing:0.019px;left:576.40px;">1,500</div>
<div class="t" style="top:808.18px;font-size:22.0px;color:#131b29;letter-spacing:-0.386px;left:1106.40px;">150</div>
<div class="t" style="top:808.18px;font-size:22.0px;color:#131b29;letter-spacing:-0.386px;left:1277.20px;">150</div>
<div class="t" style="top:808.18px;font-size:22.0px;color:#131b29;letter-spacing:-0.386px;left:1446.30px;">150</div>
<div class="t" style="top:808.18px;font-size:22.0px;color:#131b29;letter-spacing:-0.386px;left:1621.60px;">150</div>
<div class="t" style="top:808.18px;font-size:22.0px;color:#131b29;letter-spacing:-0.386px;left:1790.60px;">150</div>
<div class="t" style="top:808.18px;font-size:22.0px;color:#131b29;letter-spacing:-0.386px;left:1963.50px;">150</div>
<div class="t" style="top:808.18px;font-size:22.0px;color:#131b29;letter-spacing:-0.386px;left:2139.50px;">150</div>
<div class="t" style="top:808.18px;font-size:22.0px;color:#131b29;letter-spacing:-0.386px;left:2312.30px;">150</div>
<div class="t" style="top:808.18px;font-size:22.0px;color:#131b29;letter-spacing:-0.386px;left:2481.70px;">150</div>
<div class="t" style="top:808.18px;font-size:22.0px;color:#131b29;letter-spacing:-0.386px;left:2650.20px;">150</div>
<div class="t" style="top:896.31px;font-size:22.2px;color:#131b29;letter-spacing:0.348px;left:275.00px;-webkit-text-stroke:0.35px currentColor;">Total Earnings</div>
<div class="t" style="top:894.98px;font-size:22.0px;color:#131b29;letter-spacing:0.332px;left:576.40px;-webkit-text-stroke:0.35px currentColor;">17,25,003</div>
<div class="t" style="top:894.98px;font-size:22.0px;color:#131b29;letter-spacing:0.102px;left:762.30px;-webkit-text-stroke:0.35px currentColor;">1,43,750</div>
<div class="t" style="top:894.98px;font-size:22.0px;color:#131b29;letter-spacing:0.102px;left:932.50px;-webkit-text-stroke:0.35px currentColor;">1,43,750</div>
<div class="t" style="top:894.98px;font-size:22.0px;color:#131b29;letter-spacing:0.102px;left:1106.40px;-webkit-text-stroke:0.35px currentColor;">1,43,750</div>
<div class="t" style="top:894.98px;font-size:22.0px;color:#131b29;letter-spacing:0.102px;left:1277.20px;-webkit-text-stroke:0.35px currentColor;">1,43,750</div>
<div class="t" style="top:894.98px;font-size:22.0px;color:#131b29;letter-spacing:0.102px;left:1446.30px;-webkit-text-stroke:0.35px currentColor;">1,43,750</div>
<div class="t" style="top:894.98px;font-size:22.0px;color:#131b29;letter-spacing:0.102px;left:1621.60px;-webkit-text-stroke:0.35px currentColor;">1,43,750</div>
<div class="t" style="top:894.98px;font-size:22.0px;color:#131b29;letter-spacing:0.102px;left:1790.60px;-webkit-text-stroke:0.35px currentColor;">1,43,750</div>
<div class="t" style="top:894.98px;font-size:22.0px;color:#131b29;letter-spacing:0.102px;left:1963.50px;-webkit-text-stroke:0.35px currentColor;">1,43,750</div>
<div class="t" style="top:894.98px;font-size:22.0px;color:#131b29;letter-spacing:0.102px;left:2139.50px;-webkit-text-stroke:0.35px currentColor;">1,43,750</div>
<div class="t" style="top:894.98px;font-size:22.0px;color:#131b29;letter-spacing:0.102px;left:2312.30px;-webkit-text-stroke:0.35px currentColor;">1,43,750</div>
<div class="t" style="top:894.98px;font-size:22.0px;color:#131b29;letter-spacing:0.102px;left:2481.70px;-webkit-text-stroke:0.35px currentColor;">1,43,750</div>
<div class="t" style="top:894.98px;font-size:22.0px;color:#131b29;letter-spacing:0.102px;left:2650.20px;-webkit-text-stroke:0.35px currentColor;">1,43,750</div>
<div class="t" style="top:995.77px;font-size:26.5px;color:#131b29;letter-spacing:-0.198px;left:245.20px;">Less : Employer Share</div>
<div class="t" style="top:1079.71px;font-size:22.2px;color:#131b29;letter-spacing:0.301px;left:406.80px;">Provident Fund Employer&#x27;s Share</div>
<div class="t" style="top:1166.71px;font-size:22.2px;color:#131b29;letter-spacing:0.445px;left:406.80px;">Provident Fund Admin Charges</div>
<div class="t" style="top:1079.71px;font-size:22.2px;color:#5646aa;letter-spacing:0.482px;left:1181.40px;">View Details</div>
<div class="t" style="top:1166.71px;font-size:22.2px;color:#5646aa;letter-spacing:0.482px;left:1181.40px;">View Details</div>
<div class="t" style="top:1253.61px;font-size:22.2px;color:#131b29;letter-spacing:0.660px;left:276.00px;-webkit-text-stroke:0.35px currentColor;">Total</div>
<div class="t" style="top:1080.68px;font-size:22.0px;color:#131b29;letter-spacing:0.227px;right:97.20px;text-align:right;">21,600</div>
<div class="t" style="top:1167.68px;font-size:22.0px;color:#131b29;letter-spacing:0.019px;right:97.20px;text-align:right;">1,500</div>
<div class="t" style="top:1253.78px;font-size:22.0px;color:#131b29;letter-spacing:0.227px;right:97.20px;text-align:right;-webkit-text-stroke:0.35px currentColor;">23,100</div>
<div class="t" style="top:1374.99px;font-size:18.8px;color:#ffffff;left:-135.70px;width:800px;text-align:center;">B</div>
<div class="t" style="top:1370.57px;font-size:26.5px;color:#131b29;letter-spacing:0.174px;left:300.50px;">Taxable Income from All Heads</div>
</div>
<div style="position:absolute;left:0px;top:1314px;width:2863px;height:90px;background:linear-gradient(to bottom, rgba(0,0,0,0) 0%, rgba(0,0,0,0.012) 25%, rgba(0,0,0,0.035) 50%, rgba(0,0,0,0.07) 75%, rgba(0,0,0,0.112) 100%)"></div>
<svg style="position:absolute;left:2700px;top:1290px" width="163" height="114" viewBox="2700 1290 163 114"><defs><linearGradient id="cg" x1="0" y1="0" x2="0" y2="1"><stop offset="0" stop-color="#4a80bc"/><stop offset="1" stop-color="#5e4bb5"/></linearGradient></defs><circle cx="2791.7" cy="1342.3" r="39.2" fill="url(#cg)"/><path d="M2778.2 1326.9 Q2779.4 1325 2782.6 1325 H2805.6 Q2810.9 1325 2810.9 1330.3 V1347.8" fill="none" stroke="#fff" stroke-width="1.9" stroke-linecap="round"/><rect x="2772.3" y="1328.3" width="35.2" height="26.9" rx="6.8" fill="#fff"/><path d="M2785.5 1354.8 L2794.2 1354.8 L2789.8 1361.2 Z" fill="#fff"/><path d="M2786.6 1341 C2786.6 1338.7 2788 1337.4 2789.9 1337.4 C2791.8 1337.4 2793.2 1338.6 2793.2 1340.3 C2793.2 1342 2791.9 1342.6 2790.9 1343.3 C2790.1 1343.9 2789.8 1344.4 2789.8 1345.6" fill="none" stroke="#5679be" stroke-width="1.7" stroke-linecap="round"/><circle cx="2789.8" cy="1347.9" r="1.15" fill="#5679be"/><circle cx="2734.6" cy="1332.6" r="3.2" fill="#9fbfe4"/><circle cx="2734.6" cy="1342.3" r="3.2" fill="#9fbfe4"/><circle cx="2734.6" cy="1351.8" r="3.2" fill="#9fbfe4"/><circle cx="2744.1" cy="1332.6" r="3.2" fill="#9fbfe4"/><circle cx="2744.1" cy="1342.3" r="3.2" fill="#9fbfe4"/><circle cx="2744.1" cy="1351.8" r="3.2" fill="#9fbfe4"/></svg>
</body></html>
